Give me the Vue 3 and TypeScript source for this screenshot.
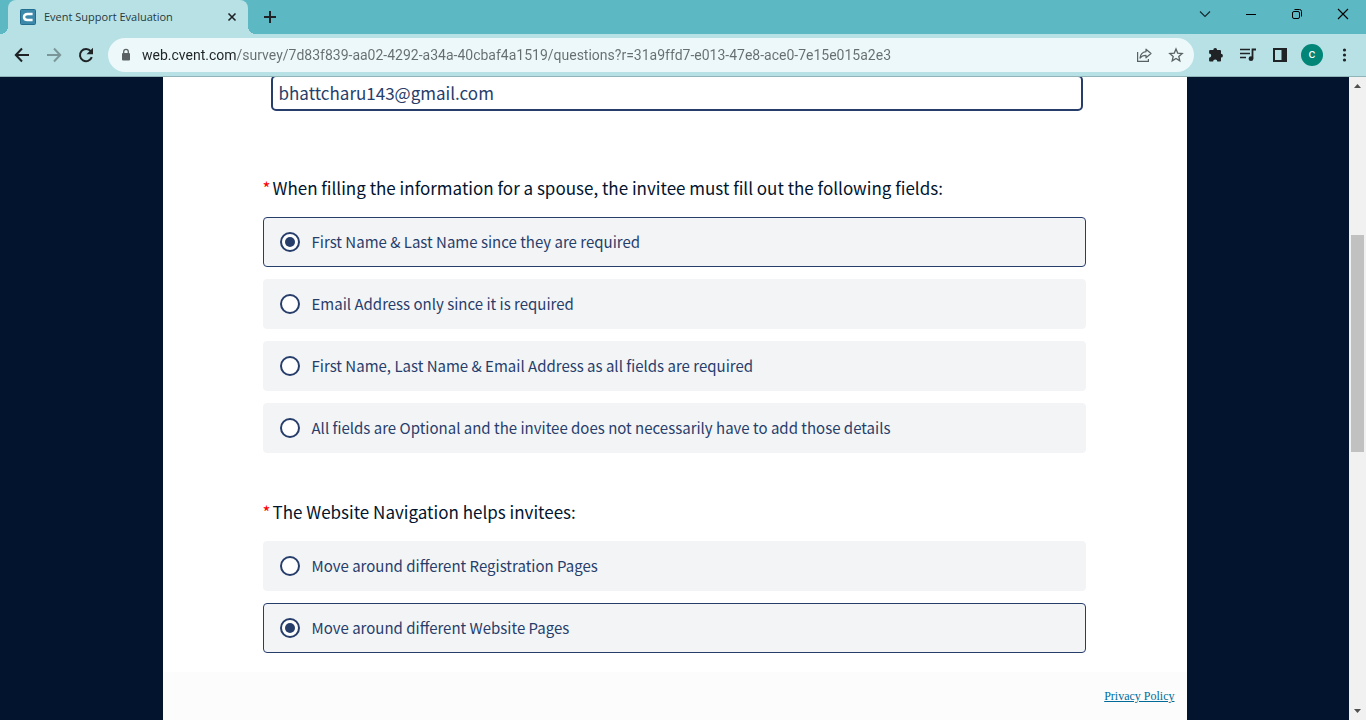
<script setup lang="ts">
import { ref } from 'vue'

interface Question {
  id: string
  title: string
  options: string[]
  answer: number
}

const url = ref('web.cvent.com/survey/7d83f839-aa02-4292-a34a-40cbaf4a1519/questions?r=31a9ffd7-e013-47e8-ace0-7e15e015a2e3')
const email = ref('bhattcharu143@gmail.com')

const questions = ref<Question[]>([
  {
    id: 'spouse',
    title: 'When filling the information for a spouse, the invitee must fill out the following fields:',
    options: [
      'First Name & Last Name since they are required',
      'Email Address only since it is required',
      'First Name, Last Name & Email Address as all fields are required',
      'All fields are Optional and the invitee does not necessarily have to add those details',
    ],
    answer: 0,
  },
  {
    id: 'navigation',
    title: 'The Website Navigation helps invitees:',
    options: ['Move around different Registration Pages', 'Move around different Website Pages'],
    answer: 1,
  },
])
</script>

<template>
  <div class="browser">
    <header class="tabstrip">
      <div class="tab">
        <svg class="favicon" width="16" height="16" viewBox="0 0 16 16" aria-hidden="true">
          <rect x=".5" y=".5" width="15" height="15" rx="1" fill="#3c88aa" stroke="#236d8f" />
          <path d="M12.600 5H7.600C5 5 4 6.400 4 8s1 3 3.600 3h5" fill="none" stroke="#fff" stroke-width="2.400" />
        </svg>
        <span class="tab-title">Event Support Evaluation</span>
        <button class="icon tab-close" type="button" aria-label="Close tab">
          <svg width="16" height="16" viewBox="0 0 16 16"><path d="M4.500 4.500l7 7M11.500 4.500l-7 7" stroke="#1f2326" stroke-width="1.600" /></svg>
        </button>
      </div>
      <button class="icon new-tab" type="button" aria-label="New tab">
        <svg width="16" height="16" viewBox="0 0 16 16"><path d="M8 2v12M2 8h12" stroke="#1f2326" stroke-width="2" /></svg>
      </button>
      <div class="window-controls">
        <button class="icon" type="button" aria-label="Search tabs">
          <svg width="16" height="16" viewBox="0 0 16 16"><path d="M3 5.500l5 5 5-5" fill="none" stroke="#14282b" stroke-width="1.100" /></svg>
        </button>
        <button class="icon" type="button" aria-label="Minimize">
          <svg width="16" height="16" viewBox="0 0 16 16"><path d="M3 8.500h10" stroke="#000" /></svg>
        </button>
        <button class="icon" type="button" aria-label="Restore">
          <svg width="16" height="16" viewBox="0 0 16 16" fill="none" stroke="#000"><rect x="3.500" y="5.500" width="7" height="7" rx="1.500" /><path d="M5.500 3.500h5a2 2 0 0 1 2 2v5" /></svg>
        </button>
        <button class="icon" type="button" aria-label="Close window">
          <svg width="16" height="16" viewBox="0 0 16 16"><path d="M3 3l10 10M13 3L3 13" stroke="#000" stroke-width="1.100" /></svg>
        </button>
      </div>
    </header>

    <div class="toolbar">
      <nav class="nav-buttons" aria-label="History">
        <button class="icon" type="button" aria-label="Back">
          <svg width="20" height="20" viewBox="0 0 20 20"><path d="M17 10H4M10 3.500L3.800 10l6.200 6.500" fill="none" stroke="#1f2326" stroke-width="2" /></svg>
        </button>
        <button class="icon" type="button" aria-label="Forward">
          <svg width="20" height="20" viewBox="0 0 20 20"><path d="M3 10h13M10 3.500l6.200 6.500-6.200 6.500" fill="none" stroke="#7b9698" stroke-width="2" /></svg>
        </button>
        <button class="icon" type="button" aria-label="Reload">
          <svg width="20" height="20" viewBox="0 0 20 20"><path d="M15.800 12.200A6.100 6.100 0 1 1 14.800 6.200" fill="none" stroke="#1f2326" stroke-width="2" /><path d="M17 2.700v6.500h-6.500z" fill="#1f2326" /></svg>
        </button>
      </nav>
      <div class="omnibox">
        <svg class="lock" width="16" height="16" viewBox="0 0 16 16" aria-hidden="true"><rect x="4" y="6" width="8" height="7.500" rx="1" fill="#5a6164" /><path d="M5.700 6.500V4.600a2.300 2.300 0 0 1 4.600 0v1.900" fill="none" stroke="#5a6164" stroke-width="1.300" /></svg>
        <input v-model="url" class="url" type="text" aria-label="Address" spellcheck="false" />
        <button class="icon" type="button" aria-label="Share">
          <svg width="16" height="16" viewBox="0 0 16 16" fill="none" stroke="#5a6164" stroke-width="1.200"><path d="M1.600 5v9.400h10.800V12" /><path d="M10 2.200l5 4.300-5 4.300V8.400c-2.800 0-4.600.8-6 2.700.4-3.500 2.400-5.900 6-6.400z" stroke-linejoin="round" /></svg>
        </button>
        <button class="icon" type="button" aria-label="Bookmark">
          <svg width="16" height="16" viewBox="0 0 16 16"><path d="M8 2l1.700 4.100 4.500.4-3.400 2.900 1 4.400L8 11.500l-3.800 2.300 1-4.400-3.400-2.900 4.500-.4z" fill="none" stroke="#5a6164" stroke-width="1.300" /></svg>
        </button>
      </div>
      <div class="actions">
        <button class="icon" type="button" aria-label="Extensions">
          <svg width="16" height="16" viewBox="0 0 16 16"><path d="M2.300 3h3a1.900 1.900 0 0 1 3.800 0h2.700c.7 0 1.200.5 1.200 1.200v2.600a1.900 1.900 0 0 1 0 3.800v2.800c0 .7-.5 1.200-1.200 1.200H9.300a2.100 2.100 0 0 0-4.200 0H2.300c-.7 0-1.200-.5-1.200-1.200v-2.700a2.100 2.100 0 0 0 0-4.200V4.200C1.100 3.500 1.600 3 2.300 3z" fill="#1f2326" /></svg>
        </button>
        <button class="icon" type="button" aria-label="Media controls">
          <svg width="16" height="16" viewBox="0 0 16 16"><path d="M0 2.500h10M0 6.500h10M0 10.500h6" stroke="#1f2326" stroke-width="1.700" /><path d="M12.500 11.500V2.500H16" fill="none" stroke="#1f2326" stroke-width="1.800" /><circle cx="11" cy="11.700" r="2.400" fill="#1f2326" /></svg>
        </button>
        <button class="icon" type="button" aria-label="Side panel">
          <svg width="16" height="16" viewBox="0 0 16 16"><path d="M1 1h14v14H1zM3 3v10h6.500V3z" fill="#1f2326" fill-rule="evenodd" /></svg>
        </button>
        <button class="avatar" type="button" aria-label="Profile C">c</button>
        <button class="icon" type="button" aria-label="Menu">
          <svg width="16" height="16" viewBox="0 0 16 16" fill="#1f2326"><circle cx="8.500" cy="3" r="1.600" /><circle cx="8.500" cy="8" r="1.600" /><circle cx="8.500" cy="13" r="1.600" /></svg>
        </button>
      </div>
    </div>

    <div class="viewport">
      <main class="page">
        <form class="survey" @submit.prevent>
          <input v-model="email" class="email" type="email" aria-label="Email address" spellcheck="false" />
          <fieldset v-for="q in questions" :key="q.id" class="question">
            <legend class="question-title"><span class="required">*</span>{{ q.title }}</legend>
            <label v-for="(option, i) in q.options" :key="option" class="option" :class="{ selected: q.answer === i }">
              <input v-model="q.answer" class="radio" type="radio" :name="q.id" :value="i" />
              <span>{{ option }}</span>
            </label>
          </fieldset>
        </form>
        <footer class="footer"><a class="privacy" href="#privacy">Privacy Policy</a></footer>
      </main>
      <div class="scrollbar" aria-hidden="true">
        <svg width="17" height="17" viewBox="0 0 17 17"><path d="M5 11l3.500-4L12 11z" fill="#505050" /></svg>
        <div class="track"><div class="thumb"></div></div>
        <svg width="17" height="17" viewBox="0 0 17 17"><path d="M5 6l3.500 4L12 6z" fill="#505050" /></svg>
      </div>
    </div>
  </div>
</template>

<style>
body {
  margin: 0;
  overflow: hidden;
}
</style>

<style scoped>
* {
  box-sizing: border-box;
}
.browser {
  display: flex;
  flex-direction: column;
  height: 100vh;
  font-family: "Noto Sans CJK JP", "Open Sans", sans-serif;
}
.icon {
  display: flex;
  flex: none;
  align-items: center;
  justify-content: center;
  padding: 0;
  border: 0;
  background: none;
}
.tabstrip {
  display: flex;
  flex: none;
  align-items: center;
  height: 34px;
  padding-left: 8px;
  background: #5cb8c2;
}
.tab {
  position: relative;
  display: flex;
  align-items: center;
  width: 240px;
  height: 34px;
  padding: 0 8px 0 12px;
  border-radius: 8px 8px 0 0;
  background: #b8e1e5;
}
.tab::before,
.tab::after {
  content: "";
  position: absolute;
  bottom: 0;
  width: 8px;
  height: 8px;
}
.tab::before {
  left: -8px;
  background: radial-gradient(circle at 0 0, #5cb8c2 8px, #b8e1e5 8px);
}
.tab::after {
  right: -8px;
  background: radial-gradient(circle at 100% 0, #5cb8c2 8px, #b8e1e5 8px);
}
.tab-title {
  flex: 1;
  margin-left: 8px;
  font-family: "Open Sans", sans-serif;
  font-size: 11px;
  line-height: 16px;
  white-space: nowrap;
  color: #26393c;
}
.new-tab {
  margin-left: 14px;
}
.window-controls {
  display: flex;
  gap: 30px;
  margin-left: auto;
  padding: 0 15px 6px 0;
}
.toolbar {
  display: flex;
  flex: none;
  align-items: center;
  height: 43px;
  padding: 0 14px 0 12px;
  border-bottom: 1px solid #8fb5b8;
  background: #b8e1e5;
}
.nav-buttons {
  display: flex;
  gap: 12px;
}
.omnibox {
  display: flex;
  flex: 1;
  align-items: center;
  gap: 16px;
  height: 34px;
  margin-left: 12px;
  padding: 0 10px;
  border-radius: 17px;
  background: #ecf8f9;
}
.url {
  flex: 1;
  min-width: 0;
  height: 24px;
  margin-left: -8px;
  padding: 0;
  border: 0;
  outline: 0;
  font: 14px/24px Roboto, "Open Sans", sans-serif;
  color: #5f6769;
  background: linear-gradient(90deg, #1f2326 94px, #666d70 94px);
  background-clip: text;
  -webkit-text-fill-color: transparent;
}
.actions {
  display: flex;
  align-items: center;
  gap: 16px;
  margin-left: 14px;
}
.avatar {
  width: 22px;
  height: 22px;
  margin: 0 -3px;
  padding: 0 0 2px;
  border: 0;
  border-radius: 50%;
  font: 13px/20px Roboto, sans-serif;
  color: #fff;
  background: #008577;
}
.viewport {
  display: flex;
  flex: 1;
  min-height: 0;
  background: #02142e;
}
.page {
  display: flex;
  flex-direction: column;
  flex: 0 1 1024px;
  min-width: 0;
  margin: 0 auto;
  overflow: hidden;
  background: #fff;
}
.survey {
  flex: none;
  margin-top: -2px;
  padding: 0 101px 19px 100px;
}
.email {
  display: block;
  width: calc(100% - 11px);
  height: 36px;
  margin: 0 3px 66px 8px;
  padding: 0 6px 2px;
  border: 2px solid #273e6b;
  border-radius: 5px;
  outline: 0;
  font: 17px/24px "Noto Sans CJK JP", "Open Sans", sans-serif;
  color: #273e6b;
  background: #fff;
}
.question {
  display: flex;
  flex-direction: column;
  gap: 12px;
  min-width: 0;
  margin: 0;
  padding: 0;
  border: 0;
}
.question + .question {
  margin-top: 48px;
}
.question-title {
  margin-bottom: 18px;
  padding: 0;
  font-size: 17px;
  line-height: 22px;
  color: #02142e;
}
.required {
  display: inline-block;
  width: 10px;
  font-size: 17px;
  line-height: 22px;
  vertical-align: top;
  color: #f00;
}
.option {
  display: flex;
  align-items: center;
  gap: 12px;
  height: 50px;
  padding: 0 16px;
  border: 1px solid #f3f4f6;
  border-radius: 4px;
  font-size: 15px;
  line-height: 24px;
  color: #273e6b;
  background: #f3f4f6;
}
.option.selected {
  border-color: #273e6b;
}
.radio {
  appearance: none;
  display: grid;
  flex: none;
  place-items: center;
  width: 20px;
  height: 20px;
  margin: 0;
  border: 2px solid #273e6b;
  border-radius: 50%;
  background: #fff;
}
.radio:checked::before {
  content: "";
  width: 10px;
  height: 10px;
  border-radius: 50%;
  background: #273e6b;
}
.footer {
  display: flex;
  flex: 1;
  align-items: flex-start;
  justify-content: flex-end;
  padding: 16px 12px;
  background: #fcfcfc;
}
.privacy {
  font: 12px/16px "Liberation Serif", serif;
  color: #006b98;
}
.scrollbar {
  display: flex;
  flex: none;
  flex-direction: column;
  width: 17px;
  background: #f1f1f1;
}
.track {
  flex: 1;
  padding: 0 2px;
}
.thumb {
  height: 217px;
  margin-top: 141px;
  background: #c1c1c1;
}
</style>
